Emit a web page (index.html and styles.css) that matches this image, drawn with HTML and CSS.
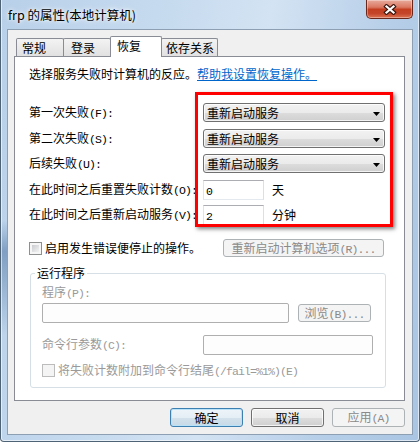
FILE: index.html
```html
<!DOCTYPE html>
<html lang="zh-CN">
<head>
<meta charset="utf-8">
<title>frp 的属性(本地计算机)</title>
<link rel="stylesheet" href="styles.css">
</head>
<body>
<div class="window">
  <div class="titlebar">
    <div class="title">frp 的属性(本地计算机)</div>
    <div class="close">
      <svg width="14" height="11" viewBox="0 0 14 11"><path d="M3.5 2.5L10.5 8.5M10.5 2.5L3.5 8.5" stroke="#3a1710" stroke-width="4.4" stroke-linecap="square" fill="none"/><path d="M3.5 2.5L10.5 8.5M10.5 2.5L3.5 8.5" stroke="#fff" stroke-width="2.2" stroke-linecap="square" fill="none"/></svg>
    </div>
  </div>
  <div class="client">
    <div class="tabs">
      <div class="tab t1">常规</div>
      <div class="tab t2">登录</div>
      <div class="tab sel">恢复</div>
      <div class="tab t4">依存关系</div>
    </div>
    <div class="panel">
      <p class="intro">选择服务失败时计算机的反应。<span class="link">帮助我设置恢复操作。</span></p>
      <div class="form">
        <div class="frow">
          <span class="lbl">第一次失败<span class="m">(F):</span></span>
          <div class="combo"><span>重新启动服务</span><svg class="arr" width="7" height="4" viewBox="0 0 7 4"><path d="M0 0H7L3.5 4Z" fill="#000"/></svg></div>
        </div>
        <div class="frow s6">
          <span class="lbl">第二次失败<span class="m">(S):</span></span>
          <div class="combo"><span>重新启动服务</span><svg class="arr" width="7" height="4" viewBox="0 0 7 4"><path d="M0 0H7L3.5 4Z" fill="#000"/></svg></div>
        </div>
        <div class="frow s5">
          <span class="lbl">后续失败<span class="m">(U):</span></span>
          <div class="combo"><span>重新启动服务</span><svg class="arr" width="7" height="4" viewBox="0 0 7 4"><path d="M0 0H7L3.5 4Z" fill="#000"/></svg></div>
        </div>
        <div class="frow s6">
          <span class="lbl">在此时间之后重置失败计数<span class="m">(O):</span></span>
          <div class="edit"><span class="m">0</span></div>
          <span class="unit">天</span>
        </div>
        <div class="frow s5">
          <span class="lbl">在此时间之后重新启动服务<span class="m">(V):</span></span>
          <div class="edit"><span class="m">2</span></div>
          <span class="unit">分钟</span>
        </div>
      </div>
      <div class="chkrow">
        <span class="chk"></span>
        <span class="chktext">启用发生错误便停止的操作。</span>
        <button class="btn dis wide">重新启动计算机选项<span class="m">(R)...</span></button>
      </div>
      <fieldset class="group">
        <legend>运行程序</legend>
        <div class="gin">
          <div class="glbl">程序<span class="m">(P):</span></div>
          <div class="prow">
            <div class="dedit pedit"></div>
            <button class="btn dis browse">浏览<span class="m">(B)...</span></button>
          </div>
          <div class="crow">
            <span class="glbl cl">命令行参数<span class="m">(C):</span></span>
            <div class="dedit cedit"></div>
          </div>
          <div class="c2row">
            <span class="chk off"></span>
            <span class="gtext">将失败计数附加到命令行结尾<span class="m">(/fail=%1%)(E)</span></span>
          </div>
        </div>
      </fieldset>
      <div class="highlight"></div>
    </div>
    <div class="actions">
      <button class="btn def">确定</button>
      <button class="btn">取消</button>
      <button class="btn dis">应用<span class="m">(A)</span></button>
    </div>
  </div>
</div>
</body>
</html>
```
FILE: styles.css
```css
* { box-sizing: border-box; }
html { background: #fff; }
body {
  margin: 0;
  width: 420px;
  height: 442px;
  overflow: hidden;
  font-family: "Noto Sans CJK SC", "Noto Sans", sans-serif;
  font-size: 12px;
  line-height: 14px;
  color: #000;
}
.m {
  font-family: "Liberation Mono", "Noto Sans CJK SC", monospace;
  font-size: 11.5px;
  letter-spacing: -0.9px;
}

.window {
  width: 420px;
  height: 442px;
  display: flex;
  flex-direction: column;
  border: 1px solid #4f6377;
  border-top: 0;
  border-radius: 0 0 4px 4px;
  background:
    linear-gradient(to bottom, transparent 50%, rgba(55, 95, 145, .45) 57%, rgba(55, 95, 145, .2) 68%, transparent 76%) left top / 7px 100% no-repeat,
    linear-gradient(100deg, #b8d0e9 0%, #c7dbef 35%, #d3e3f3 55%, #b6cee8 80%, #a9c5e2 100%);
  box-shadow: inset 1px 0 0 rgba(255,255,255,.6), inset -1px 0 0 rgba(255,255,255,.6), inset 0 -1px 0 rgba(255,255,255,.6);
}

.titlebar {
  flex: none;
  height: 29px;
  display: flex;
  justify-content: space-between;
  align-items: flex-start;
  padding-left: 7px;
}
.title {
  padding-top: 7px;
  line-height: 16px;
  font-size: 12.5px;
  white-space: nowrap;
  text-shadow: 0 0 6px #fff, 0 0 3px rgba(255,255,255,.9);
}
.close {
  width: 47px;
  height: 19px;
  margin-right: 6px;
  border: 1px solid #6a281c;
  border-top: 0;
  border-radius: 0 0 5px 5px;
  background: linear-gradient(#e9ab9c 0%, #da7862 40%, #c43f21 52%, #c4452a 75%, #dc7352 100%);
  box-shadow: inset 0 0 0 1px rgba(255,255,255,.35);
  display: flex;
  align-items: center;
  justify-content: center;
}

.client {
  flex: none;
  height: 406px;
  margin: 0 6px;
  border: 1px solid #8d9fb3;
  background: #f0f0f0;
  padding: 6px 7px 7px 6px;
  display: flex;
  flex-direction: column;
}

.tabs {
  flex: none;
  height: 20px;
  display: flex;
  align-items: flex-end;
  padding-left: 2px;
}
.tab {
  height: 18px;
  border: 1px solid #898c95;
  border-bottom: 0;
  border-radius: 2px 2px 0 0;
  background: linear-gradient(#f3f3f3, #e1e1e1);
  padding: 2px 0 0 5px;
  white-space: nowrap;
}
.tab + .tab { margin-left: -1px; }
.t1 { width: 48px; }
.t2 { width: 48px; padding-left: 7px; }
.sel {
  width: 52px;
  height: 21px;
  margin-bottom: -1px;
  padding-left: 6px;
  background: #fff;
  position: relative;
  z-index: 1;
}
.t4 { width: 57px; padding-left: 4px; }

.panel {
  flex: none;
  position: relative;
  height: 345px;
  border: 1px solid #898c95;
  background: #fff;
  padding: 0 18px 0 14px;
}
.intro {
  margin: 10px 0 0;
  white-space: nowrap;
}
.link {
  color: #0066cc;
  text-decoration: underline;
}

.form {
  margin-top: 22px;
  display: flex;
  flex-direction: column;
}
.frow {
  display: flex;
  align-items: center;
  height: 20px;
}
.frow.s6 { margin-top: 6px; }
.frow.s5 { margin-top: 5px; }
.lbl {
  flex: none;
  width: 174px;
  white-space: nowrap;
}
.combo {
  align-self: flex-start;
  width: 182px;
  height: 19px;
  border: 1px solid #707070;
  border-radius: 3px;
  background: linear-gradient(#f2f2f2 0%, #ebebeb 50%, #dddddd 51%, #cfcfcf 100%);
  box-shadow: inset 0 0 0 1px rgba(255,255,255,.75);
  padding: 0 4px 0 3px;
  display: flex;
  align-items: center;
  justify-content: space-between;
  white-space: nowrap;
}
.arr { margin-top: 2px; }
.edit {
  width: 61px;
  height: 20px;
  border: 1px solid;
  border-color: #abadb3 #dbdfe6 #e3e9ef #e2e3ea;
  background: #fff;
  padding-left: 2px;
  line-height: 18px;
}
.unit { margin-left: 8px; }

.chkrow {
  display: flex;
  align-items: flex-start;
  margin-top: 14px;
  height: 18px;
}
.chk {
  flex: none;
  width: 13px;
  height: 13px;
  margin-top: 3px;
  border: 1px solid #8e8f8f;
  padding: 2px;
  background: linear-gradient(135deg, #c9cbcf, #f3f3f3) content-box, #f6f6f6;
}
.chktext {
  margin: 2px 0 0 3px;
  white-space: nowrap;
}
.chk.off {
  margin-top: 0;
  border-color: #bcbcbc;
  background: #f4f4f4;
}

.btn {
  flex: none;
  width: 73px;
  height: 19px;
  padding: 0;
  margin: 0;
  font: inherit;
  line-height: 16px;
  color: #000;
  text-align: center;
  white-space: nowrap;
  border: 1px solid #707070;
  border-radius: 3px;
  background: linear-gradient(#f2f2f2 0%, #ebebeb 50%, #dddddd 51%, #cfcfcf 100%);
  box-shadow: inset 0 0 0 1px rgba(255,255,255,.75);
}
.btn.def {
  border-color: #3c7fb1;
  background: linear-gradient(#eef5fa 0%, #e4eef5 50%, #d3e2ec 51%, #c8dae7 100%);
  box-shadow: inset 0 0 0 1px #b9e1f7;
}
.btn.dis {
  color: #8a8a8a;
  border-color: #adb2b5;
  background: #f4f4f4;
  box-shadow: none;
}
.btn.wide {
  width: 161px;
  height: 18px;
  margin-left: auto;
  margin-right: 2px;
}

.group {
  margin: 9px 0 0 1px;
  padding: 5px 0 10px 0;
  border: 1px solid #d5dfe5;
  border-radius: 3px;
  min-width: 0;
}
.group legend {
  margin-left: 4px;
  padding: 0 2px;
  line-height: 14px;
}
.gin { padding-left: 11px; }
.glbl {
  color: #9a9a9a;
  white-space: nowrap;
}
.prow {
  display: flex;
  align-items: center;
  margin-top: 2px;
  height: 20px;
}
.dedit {
  flex: none;
  height: 20px;
  border: 1px solid #afafaf;
  border-radius: 2px;
  background: #fdfdfd;
}
.pedit { width: 247px; }
.btn.browse {
  margin-left: 9px;
  height: 18px;
}
.crow {
  display: flex;
  align-items: center;
  margin-top: 12px;
  height: 20px;
}
.cl { flex: none; width: 161px; }
.cedit { width: 170px; }
.c2row {
  display: flex;
  align-items: center;
  margin-top: 9px;
  height: 13px;
}
.gtext {
  margin-left: 3px;
  color: #9a9a9a;
  white-space: nowrap;
}

.highlight {
  position: absolute;
  left: 180px;
  top: 35px;
  width: 198px;
  height: 135px;
  border: 3px solid #ff0000;
  box-shadow: 2px 2px 4px rgba(0,0,0,.5);
  pointer-events: none;
}

.actions {
  flex: none;
  display: flex;
  justify-content: flex-end;
  gap: 8px;
  margin-top: 7px;
  height: 19px;
}
```
